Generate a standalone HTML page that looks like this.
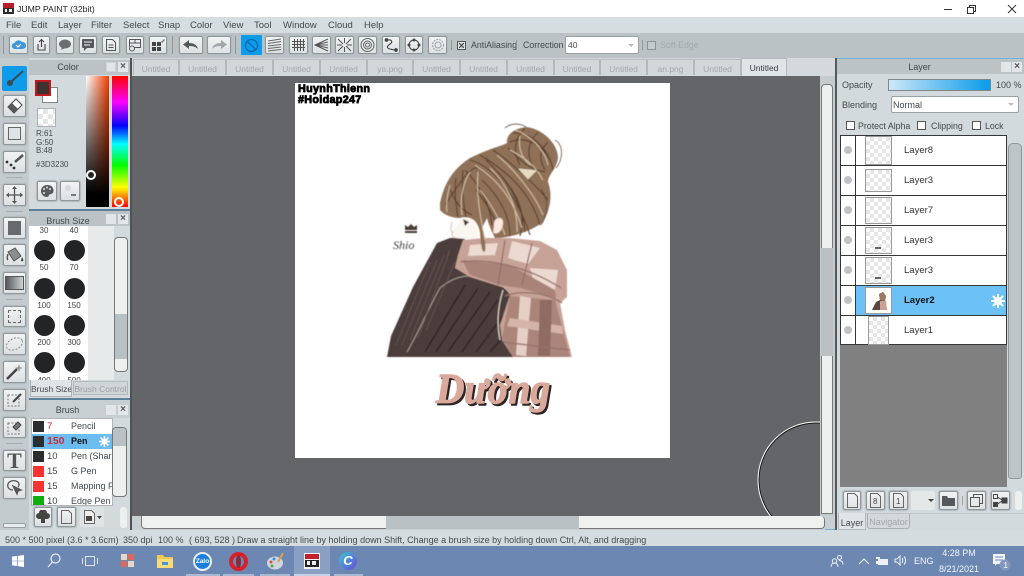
<!DOCTYPE html>
<html><head><meta charset="utf-8"><title>JUMP PAINT</title>
<style>
html,body{margin:0;padding:0;width:1024px;height:576px;overflow:hidden;background:#d5dcdf}
*{box-sizing:border-box}
body{font-family:"Liberation Sans",sans-serif;font-size:9px;color:#44494c;position:relative}
.a,.t,.b,svg.i{position:absolute}
.t{white-space:nowrap;line-height:12px}
.b{background:linear-gradient(#f1f3f4,#dde1e3);border:1px solid #8f979a;border-radius:2px;box-shadow:0 0 1px 1px #b2b9bc}
.c{text-align:center}
.tab{position:absolute;top:59px;height:16px;background:#d2d7d9;border:1px solid #b3b9bc;border-bottom:0;color:#a3a8ab;text-align:center;line-height:18px;font-size:8.500px}
.chk{background:conic-gradient(#e6e6e6 25%,#fff 0 50%,#e6e6e6 0 75%,#fff 0) 0 0/8px 8px}
.lr{position:absolute;left:840px;width:167px;height:30px;background:#fff;border:1px solid #33373a;border-bottom:0}
.dot{position:absolute;left:3px;top:10px;width:8px;height:8px;border-radius:50%;background:#bfc3c5}
.vl{position:absolute;left:14px;top:0;bottom:0;width:1px;background:#33373a}
.th{position:absolute;left:24px;top:1px;width:27px;height:27px;border:1px solid #9a9a9a}
.ln{position:absolute;left:63px;top:9px;font-size:9.500px;line-height:12px;color:#333}
.dotb{position:absolute;width:21px;height:21px;border-radius:50%;background:#222426}
.bl{position:absolute;font-size:8px;width:30px;text-align:center;color:#444;line-height:10px}
.row{position:absolute;left:32px;width:80px;height:15px;background:#fff;line-height:15px;font-size:9px}
.sw{position:absolute;left:1px;top:2px;width:11px;height:11px;background:#2b2d2f}
.n{position:absolute;left:15px;top:0;font-size:9.500px}
.nm{position:absolute;left:39px;top:0;width:41px;overflow:hidden;white-space:nowrap}
.ub{position:absolute;top:574px;height:2px;background:#a9b9d2}
</style></head><body>

<!-- title bar -->
<div class="a" style="left:0;top:0;width:1024px;height:17px;background:#fff"></div>
<svg class="i" style="left:3px;top:3px" width="11" height="11"><rect width="11" height="5" y="0" fill="#b3202a"/><rect y="5" width="11" height="6" fill="#2a2a2a"/><rect x="2" y="6" width="2" height="3" fill="#eee"/><rect x="6" y="6" width="3" height="3" fill="#eee"/></svg>
<div class="t" style="left:17px;top:3px;font-size:8.700px;color:#222">JUMP PAINT (32bit)</div>
<svg class="i" style="left:930px;top:2px" width="94" height="14" fill="none" stroke="#333" stroke-width="1"><path d="M14 7.500h8"/><path d="M37.500 5.500h6v6h-6zM39.500 5.500v-2h6v6h-2"/><path d="M78 3l8 8M86 3l-8 8"/></svg>

<!-- menu bar -->
<div class="a" style="left:0;top:17px;width:1024px;height:16px;background:#d6dde0"></div>
<div class="t" style="left:6px;top:20px;font-size:9.500px">File</div>
<div class="t" style="left:31px;top:20px;font-size:9.500px">Edit</div>
<div class="t" style="left:58px;top:20px;font-size:9.500px">Layer</div>
<div class="t" style="left:91px;top:20px;font-size:9.500px">Filter</div>
<div class="t" style="left:123px;top:20px;font-size:9.500px">Select</div>
<div class="t" style="left:158px;top:20px;font-size:9.500px">Snap</div>
<div class="t" style="left:190px;top:20px;font-size:9.500px">Color</div>
<div class="t" style="left:223px;top:20px;font-size:9.500px">View</div>
<div class="t" style="left:254px;top:20px;font-size:9.500px">Tool</div>
<div class="t" style="left:283px;top:20px;font-size:9.500px">Window</div>
<div class="t" style="left:328px;top:20px;font-size:9.500px">Cloud</div>
<div class="t" style="left:364px;top:20px;font-size:9.500px">Help</div>

<!-- toolbar -->
<div class="a" style="left:0;top:33px;width:1024px;height:25px;background:#bac2c6"></div>
<div class="a" style="left:3px;top:36px;width:1px;height:18px;background:#8f979b"></div>
<div class="a" style="left:172px;top:36px;width:1px;height:18px;background:#8f979b"></div>
<div class="a" style="left:235px;top:36px;width:1px;height:18px;background:#8f979b"></div>
<div class="b" style="left:9px;top:36px;width:19px;height:18px"></div>
<svg class="i" style="left:11px;top:39px" width="15" height="12"><path d="M4 10a3 3 0 0 1-.5-6A4.500 4.500 0 0 1 11 3a3.500 3.500 0 0 1 1 7z" fill="#3d97dc"/><path d="M5 6l2 2 3-3" stroke="#fff" stroke-width="1.200" fill="none"/></svg>
<div class="b" style="left:33px;top:36px;width:17px;height:18px"></div>
<svg class="i" style="left:35px;top:38px" width="13" height="14" fill="none" stroke="#444" stroke-width="1.100"><path d="M3 6v6h7V6M6.500 9V1.500M4 4l2.500-2.500L9 4"/></svg>
<div class="b" style="left:56px;top:36px;width:18px;height:18px"></div>
<svg class="i" style="left:58px;top:39px" width="14" height="12"><ellipse cx="7" cy="5" rx="6" ry="4.500" fill="#6b6f72"/><path d="M4 8l-1 3 4-2z" fill="#6b6f72"/></svg>
<div class="b" style="left:79px;top:36px;width:18px;height:18px"></div>
<svg class="i" style="left:81px;top:39px" width="14" height="12"><rect x="1" y="0" width="12" height="9" rx="1" fill="#55595c"/><path d="M3 9v3l3-3z" fill="#55595c"/><path d="M3 3h8M3 6h6" stroke="#eee"/></svg>
<div class="b" style="left:102px;top:36px;width:18px;height:18px"></div>
<svg class="i" style="left:105px;top:38px" width="12" height="14" fill="none" stroke="#555"><path d="M1.500 1.500h6l3 3v8h-9zM3.500 7h5M3.500 9.500h5"/></svg>
<div class="b" style="left:126px;top:36px;width:18px;height:18px"></div>
<svg class="i" style="left:128px;top:38px" width="14" height="14" fill="none" stroke="#555"><path d="M1.500 1.500h11v8h-6M1.500 1.500v7M1.500 5h11M7 1.500V5"/><circle cx="4" cy="10.500" r="2.500"/></svg>
<div class="b" style="left:149px;top:36px;width:18px;height:18px"></div>
<svg class="i" style="left:151px;top:39px" width="14" height="13" fill="#444"><rect x="1" y="3" width="4" height="4"/><rect x="6" y="3" width="4" height="4"/><rect x="1" y="8" width="4" height="4"/><rect x="6" y="8" width="4" height="4"/><path d="M10 3l3-3 1 1-3 3z" fill="#777"/></svg>
<div class="b" style="left:179px;top:36px;width:24px;height:18px"></div>
<svg class="i" style="left:183px;top:40px" width="16" height="10"><path d="M6 0v3c5 0 8 2 9 6-2-2-5-3-9-3v3L0 4.500z" fill="#55595c"/></svg>
<div class="b" style="left:207px;top:36px;width:24px;height:18px"></div>
<svg class="i" style="left:211px;top:40px" width="16" height="10"><path d="M10 0v3C5 3 2 5 1 9c2-2 5-3 9-3v3l6-4.500z" fill="#a2a7aa"/></svg>
<div class="a" style="left:241px;top:35px;width:21px;height:20px;background:#0d9bea"></div>
<svg class="i" style="left:244px;top:38px" width="15" height="15" fill="none" stroke="#0a69b0" stroke-width="1.300"><circle cx="7.500" cy="7.500" r="6"/><path d="M3.500 3.500l8 8"/></svg>
<div class="b" style="left:265px;top:36px;width:19px;height:18px"></div>
<svg class="i" style="left:267px;top:38px" width="15" height="14" fill="none" stroke="#666"><path d="M1 3l13-2M1 5.500l13-2M1 8l13-1.500M1 10.500l13-1.500M1 13l13-1.500"/></svg>
<div class="b" style="left:289px;top:36px;width:19px;height:18px"></div>
<svg class="i" style="left:291px;top:38px" width="15" height="14" fill="none" stroke="#555"><path d="M1 3.500h13M1 6.500h13M1 9.500h13M3.500 1v12M6.500 1v12M9.500 1v12M12.500 1v12"/></svg>
<div class="b" style="left:312px;top:36px;width:19px;height:18px"></div>
<svg class="i" style="left:314px;top:38px" width="15" height="14" fill="none" stroke="#555"><path d="M14 1L1 7l13 6M14 4L1 7l13 3M14 7H1"/></svg>
<div class="b" style="left:335px;top:36px;width:19px;height:18px"></div>
<svg class="i" style="left:337px;top:38px" width="15" height="14" fill="none" stroke="#555"><path d="M1 1l5 5M14 1L9 6M1 13l5-5M14 13L9 8M7.500 0v5M7.500 9v5M0 7h5M10 7h5"/></svg>
<div class="b" style="left:358px;top:36px;width:19px;height:18px"></div>
<svg class="i" style="left:360px;top:38px" width="15" height="14" fill="none" stroke="#666"><circle cx="7.500" cy="7" r="6.500"/><circle cx="7.500" cy="7" r="4"/><circle cx="7.500" cy="7" r="2"/></svg>
<div class="b" style="left:382px;top:36px;width:18px;height:18px"></div>
<svg class="i" style="left:384px;top:38px" width="14" height="14" fill="none" stroke="#444" stroke-width="1.100"><path d="M3 2c5-1 6 2 3 4s-4 4 0 5 5 1 6 1"/><circle cx="2.500" cy="2" r="1.300" fill="#444"/><circle cx="12" cy="12" r="1.300" fill="#444"/></svg>
<div class="b" style="left:405px;top:36px;width:18px;height:18px"></div>
<svg class="i" style="left:407px;top:38px" width="14" height="14" fill="none" stroke="#444"><circle cx="7" cy="7" r="5"/><g fill="#444"><circle cx="7" cy="2" r="1"/><circle cx="7" cy="12" r="1"/><circle cx="2" cy="7" r="1"/><circle cx="12" cy="7" r="1"/></g></svg>
<div class="b" style="left:428px;top:36px;width:19px;height:18px"></div>
<svg class="i" style="left:431px;top:38px" width="14" height="14" fill="none" stroke="#9ea3a5"><circle cx="7" cy="7" r="5.500" stroke-dasharray="2 1"/><circle cx="7" cy="7" r="3"/></svg>
<div class="a" style="left:451px;top:40px;width:1px;height:10px;background:#8f979b"></div>
<div class="a" style="left:457px;top:41px;width:9px;height:9px;border:1px solid #555;background:#dfe3e5"></div>
<svg class="i" style="left:459px;top:43px" width="5" height="5" stroke="#333"><path d="M0 0l5 5M5 0L0 5"/></svg>
<div class="t" style="left:471px;top:39px;font-size:8.800px">AntiAliasing</div>
<div class="a" style="left:516px;top:40px;width:1px;height:10px;background:#8f979b"></div>
<div class="t" style="left:523px;top:39px;font-size:8.800px">Correction</div>
<div class="a" style="left:565px;top:36px;width:74px;height:18px;background:#fff;border:1px solid #9aa1a4;border-radius:2px;font-size:8.500px;line-height:17px;padding-left:2px">40<span class="a" style="right:4px;top:7px;border:3px solid transparent;border-top-color:#bbb"></span></div>
<div class="a" style="left:642px;top:40px;width:1px;height:10px;background:#8f979b"></div>
<div class="a" style="left:647px;top:41px;width:9px;height:9px;border:1px solid #8d9396;background:#c4cbce"></div>
<div class="t" style="left:660px;top:39px;font-size:8.800px;color:#a3a9ac">Soft Edge</div>

<!-- tabs strip -->
<div class="a" style="left:130px;top:58px;width:705px;height:18px;background:#d3d9dc"></div>
<div class="tab" style="left:133px;width:46px">Untitled</div>
<div class="tab" style="left:179px;width:47px">Untitled</div>
<div class="tab" style="left:226px;width:47px">Untitled</div>
<div class="tab" style="left:273px;width:47px">Untitled</div>
<div class="tab" style="left:320px;width:47px">Untitled</div>
<div class="tab" style="left:367px;width:46px">ya.png</div>
<div class="tab" style="left:413px;width:47px">Untitled</div>
<div class="tab" style="left:460px;width:47px">Untitled</div>
<div class="tab" style="left:507px;width:47px">Untitled</div>
<div class="tab" style="left:554px;width:46px">Untitled</div>
<div class="tab" style="left:600px;width:47px">Untitled</div>
<div class="tab" style="left:647px;width:47px">an.png</div>
<div class="tab" style="left:694px;width:47px">Untitled</div>
<div class="tab" style="left:741px;width:46px;top:58px;height:18px;background:#dfe4e6;color:#3c4144;line-height:19px">Untitled</div>

<!-- canvas area -->
<div class="a" style="left:132px;top:76px;width:688px;height:440px;background:#636569;overflow:hidden">
  <svg class="a" style="left:0;top:0" width="688" height="440"><circle cx="684" cy="404" r="57" fill="none" stroke="#111" stroke-width="1"/><circle cx="684" cy="404" r="58" fill="none" stroke="#fff" stroke-width="1"/></svg>
</div>
<div class="a" style="left:295px;top:83px;width:375px;height:375px;background:#fff"></div>
<div class="t" style="left:298px;top:84px;font-size:10.800px;font-weight:bold;color:#000;line-height:11px;letter-spacing:.3px;-webkit-text-stroke:.8px #000">HuynhThienn<br>#Hoidap247</div>

<svg class="i" style="left:295px;top:83px" width="375" height="375" viewBox="295 83 375 375">
<defs><filter id="s" x="-5%" y="-5%" width="110%" height="110%"><feGaussianBlur stdDeviation=".4"/></filter></defs>
<g filter="url(#s)">
<!-- jacket -->
<path d="M387 357L391 336 413 287 437 243 450 238 465 238 457 268 503 287 514 297 502 325 513 357Z" fill="#4b3c3b"/>
<path d="M407 352C420 330 430 305 440 288 452 278 465 274 476 277" fill="none" stroke="#a59a90" stroke-width="1"/>
<path d="M396 345L430 262M402 345L437 260M410 340L444 255M418 338L450 250M426 330L455 262" stroke="#6a5957" stroke-width=".7" fill="none"/>
<path d="M425 352L465 285M436 352L478 288M448 352L490 292M462 352L498 300M476 352L503 316M490 352L505 335" stroke="#372a2a" stroke-width="1.800" fill="none"/>
<!-- face -->
<path d="M453 230C451 233 451 236 454 238L478 240 476 220 462 218Z" fill="#fcf6f1"/>
<path d="M452 222C450 228 451 232 453 232 451 235 452 238 456 238" stroke="#bfa79c" stroke-width=".7" fill="none"/>
<path d="M463 219L469 222 465 226Z" fill="#4c3a30"/>
<!-- scarf -->
<path d="M463 240L485 238 510 238 540 241 557 250 567 270 567 297 560 303 565 330 572 357 513 357 502 340 500 325 510 295 505 288 470 277 455 268 458 255Z" fill="#c7a296"/>
<path d="M512 241L508 258 528 264 540 248ZM470 245L498 243 495 255 468 256ZM530 268L558 270 555 290 535 285Z" fill="#ecd9d0"/>
<path d="M462 260L510 265 555 290 556 298 520 288 500 285 470 275Z" fill="#a98378"/>
<path d="M510 296L555 300 570 357 513 357 502 338Z" fill="#ab8579"/>
<path d="M520 296L516 355 526 356 531 298Z" fill="#e6cfc5"/>
<path d="M510 318L562 326 563 334 507 326Z" fill="#d5b5a9"/>
<path d="M540 300L538 356 550 356 552 300Z" fill="#8f6c62"/>
<path d="M505 240L498 285M532 243L522 285M460 262C485 258 525 265 561 288M505 296C520 290 545 292 562 303M503 342L570 350" stroke="#94716a" stroke-width="1.300" fill="none"/>
<path d="M503 290C497 310 497 325 500 340" stroke="#d9cfc6" stroke-width="1.200" fill="none"/>
<!-- hair -->
<path d="M440 203C445 180 455 168 470 158 490 148 505 145 507 143 506 134 515 128 527 127 545 130 558 145 558 158 556 170 548 175 548 182 553 195 550 210 543 222 530 232 510 238 495 238 490 228 488 222 487 218L482 228C485 240 487 250 484 252 483 252 481 250 480 232 478 222 472 215 460 218 452 218 444 215 440 210Z" fill="#8f7158"/>
<g fill="none" stroke="#59402e" stroke-width="1.100">
<path d="M470 160C490 165 515 190 530 235M480 155C505 170 530 190 540 225M493 150C515 165 540 190 548 200M465 170C480 185 490 205 492 225M510 142C525 135 545 145 552 165M513 133C530 130 550 150 553 170M508 148C520 160 530 170 545 172M450 190C455 200 460 210 472 215M445 205C455 190 470 165 478 168"/>
<path d="M486 160C505 178 522 200 525 232M498 172C512 188 528 208 520 236M482 180C498 195 510 215 510 236M476 190C488 205 495 218 500 232M525 128C515 138 512 150 520 165M538 132C528 142 525 155 535 170M548 142C540 150 538 158 545 170M456 178C454 192 456 205 458 217M463 170C461 190 464 205 466 217"/>
</g>
<g fill="none" stroke="#d6c2a8" stroke-width="1">
<path d="M475 165C490 175 510 190 522 228M497 155C515 170 535 195 543 215M515 130C530 135 545 150 548 165M478 172C476 195 480 215 485 240M490 168C505 182 518 205 517 232M510 150C525 158 535 165 543 180M470 172C462 185 460 200 462 215M450 185C447 195 446 205 447 212M520 136C518 148 522 158 530 165M480 190C492 205 500 220 505 235"/>
</g>
<path d="M555 140C564 145 563 160 556 168M541 189C549 200 548 215 541 225M505 128C512 122 522 124 526 127" fill="none" stroke="#4f3a2c" stroke-width=".7"/>
<path d="M517 168L538 170 528 180Z" fill="#e6dcc2" stroke="#6b5540" stroke-width=".6"/>
<path d="M494 222C497 215 505 217 503 225 502 232 497 235 493 233Z" fill="#fbe9df" stroke="#a8836a" stroke-width=".5"/>
<!-- crown/signature -->
<path d="M405 230L405 225 408 227 411 224 414 227 417 225 417 230Z M405 231H417V233H405Z" fill="#4a3b36"/>
<text x="393" y="249" font-family="Liberation Serif,serif" font-style="italic" font-size="12" fill="#3a3a3a">Shio</text>
</g>
<!-- Duong lettering -->
<text x="438" y="405" font-family="Liberation Serif,serif" font-weight="bold" font-style="italic" font-size="42" fill="#2e2424" stroke="#2e2424" stroke-width="1.400" stroke-linejoin="round" textLength="114" lengthAdjust="spacingAndGlyphs">Dưỡng</text>
<text x="436" y="403" font-family="Liberation Serif,serif" font-weight="bold" font-style="italic" font-size="42" fill="#d9a99c" stroke="#d9a99c" stroke-width="1.400" stroke-linejoin="round" textLength="114" lengthAdjust="spacingAndGlyphs">Dưỡng</text>
</svg>

<!-- canvas scrollbars -->
<div class="a" style="left:820px;top:76px;width:15px;height:454px;background:#c4ccd0"></div>
<div class="a" style="left:821px;top:84px;width:12px;height:430px;background:#eef0f0;border:1px solid #777;border-radius:4px 4px 0 0"></div>
<div class="a" style="left:821px;top:248px;width:12px;height:108px;background:#b9c1c4"></div>
<div class="a" style="left:132px;top:516px;width:703px;height:14px;background:#c8d0d3"></div>
<div class="a" style="left:141px;top:516px;width:684px;height:13px;background:#eff1f1;border:1px solid #777;border-top:0;border-radius:0 4px 4px 4px"></div>
<div class="a" style="left:386px;top:516px;width:193px;height:13px;background:#b9c1c4"></div>
<div class="a" style="left:825px;top:529px;width:10px;height:1px;background:#6cb4de"></div>
<div class="a" style="left:835px;top:58px;width:2px;height:472px;background:#55595c"></div>

<!-- left column -->
<div class="a" style="left:0;top:58px;width:29px;height:472px;background:#c3cbce"></div>
<div class="a" style="left:29px;top:58px;width:103px;height:472px;background:#d3dadd"></div>
<div class="a" style="left:130px;top:58px;width:2px;height:472px;background:#4e5255"></div>

<div class="a" style="left:2px;top:66px;width:25px;height:25px;background:#0d9bea;border-radius:2px"></div>
<svg class="i" style="left:4px;top:68px" width="21" height="21" fill="none" stroke="#3a4a55"><path d="M19 3L8 13" stroke-width="2"/><circle cx="6" cy="15" r="2.500" fill="#3a4a55"/></svg>
<div class="b" style="left:3px;top:95px;width:23px;height:22px"></div>
<svg class="i" style="left:4px;top:96px" width="21" height="20"><path d="M4 11l8-8 6 6-8 8z" fill="#fff" stroke="#444"/><path d="M4 11l4-4 6 6-4 4z" fill="#55595c"/></svg>
<div class="b" style="left:3px;top:123px;width:23px;height:22px"></div>
<div class="a" style="left:8px;top:127px;width:13px;height:13px;border:1px solid #666;background:#dfe3e5"></div>
<div class="b" style="left:3px;top:151px;width:23px;height:22px"></div>
<svg class="i" style="left:4px;top:152px" width="21" height="20"><path d="M11 10L19 3" stroke="#555" stroke-width="2.500"/><circle cx="3" cy="10" r="1.400" fill="#333"/><circle cx="7" cy="13" r="1.400" fill="#333"/><circle cx="10" cy="16" r="1.400" fill="#333"/></svg>
<div class="a" style="left:6px;top:177px;width:17px;height:1px;background:#a8afb2"></div>
<div class="b" style="left:3px;top:184px;width:23px;height:22px"></div>
<svg class="i" style="left:5px;top:185px" width="19" height="20" stroke="#555" fill="#555" stroke-width="1.300"><path d="M9.500 2v16M1.500 10h16" fill="none"/><path d="M9.500 1l-2.500 3h5zM9.500 19l-2.500-3h5zM1 10l3-2.500v5zM18 10l-3-2.500v5z" stroke="none"/></svg>
<div class="a" style="left:6px;top:211px;width:17px;height:1px;background:#a8afb2"></div>
<div class="b" style="left:3px;top:217px;width:23px;height:22px"></div>
<div class="a" style="left:8px;top:221px;width:13px;height:14px;background:#666a6d"></div>
<div class="b" style="left:3px;top:244px;width:23px;height:22px"></div>
<svg class="i" style="left:4px;top:245px" width="21" height="20"><path d="M4 7l7-4 6 8-7 5z" fill="#8a8e90" stroke="#555"/><path d="M4 9c-1 3-1 5 0 6" stroke="#555" stroke-width="1.500" fill="none"/><path d="M18 12c1 2 2 3 1 4s-2 0-2-1z" fill="#444"/></svg>
<div class="b" style="left:3px;top:272px;width:23px;height:22px"></div>
<div class="a" style="left:5px;top:276px;width:19px;height:14px;background:linear-gradient(90deg,#55585a,#cfd2d4);border:1px solid #555"></div>
<div class="a" style="left:6px;top:299px;width:17px;height:1px;background:#a8afb2"></div>
<div class="b" style="left:3px;top:306px;width:23px;height:21px"></div>
<div class="a" style="left:8px;top:310px;width:13px;height:13px;border:1px dashed #666"></div>
<div class="b" style="left:3px;top:333px;width:23px;height:22px"></div>
<svg class="i" style="left:4px;top:334px" width="21" height="20" fill="none" stroke="#8a8e90" stroke-dasharray="2 1.500"><ellipse cx="10.500" cy="10" rx="8.500" ry="5.500" transform="rotate(-25 10.500 10)"/></svg>
<div class="b" style="left:3px;top:361px;width:23px;height:22px"></div>
<svg class="i" style="left:4px;top:362px" width="21" height="20"><path d="M3 17L13 7" stroke="#444" stroke-width="2.500"/><path d="M15 2l1 3 3 1-3 1-1 3-1-3-3-1 3-1z" fill="#999"/></svg>
<div class="b" style="left:3px;top:389px;width:23px;height:22px"></div>
<svg class="i" style="left:5px;top:391px" width="19" height="18" fill="none"><rect x="3" y="4" width="11" height="11" stroke="#777" stroke-dasharray="2 1.500"/><path d="M8 11l8-8" stroke="#444" stroke-width="2"/></svg>
<div class="b" style="left:3px;top:417px;width:23px;height:21px"></div>
<svg class="i" style="left:5px;top:418px" width="19" height="19" fill="none"><rect x="3" y="5" width="11" height="11" stroke="#777" stroke-dasharray="2 1.500"/><path d="M8 9l5-5 3 3-5 5z" fill="#777" stroke="#444"/></svg>
<div class="a" style="left:6px;top:443px;width:17px;height:1px;background:#a8afb2"></div>
<div class="b" style="left:3px;top:450px;width:23px;height:21px"></div>
<div class="t c" style="left:2px;top:450px;width:25px;line-height:22px;font-family:'Liberation Serif',serif;font-weight:bold;font-size:22px;color:#555">T</div>
<div class="b" style="left:3px;top:477px;width:23px;height:22px"></div>
<svg class="i" style="left:4px;top:478px" width="21" height="20" fill="none" stroke="#555" stroke-width="1.300"><path d="M9 12C5 12 3 9 4 6s5-4 8-3 4 4 2 6"/><path d="M9 8l8 4-3 1-1 3z" fill="#555"/></svg>
<div class="a" style="left:3px;top:523px;width:23px;height:5px;background:#e8ecee;border:1px solid #9aa1a4;border-radius:2px"></div>

<!-- Color panel -->
<div class="a" style="left:29px;top:60px;width:101px;height:15px;background:#bcc3c6"></div>
<div class="t c" style="left:29px;top:61px;width:78px;font-size:9px">Color</div>
<div class="a" style="left:106px;top:62px;width:10px;height:10px;background:#e2e6e8;border:1px solid #cfd4d6"></div>
<div class="a" style="left:118px;top:62px;width:10px;height:10px;background:#e2e6e8;color:#555;font-size:10px;line-height:10px;text-align:center;font-weight:bold">×</div>
<div class="a" style="left:42px;top:87px;width:16px;height:16px;background:#fff;border:1px solid #7f8689"></div>
<div class="a" style="left:35px;top:80px;width:16px;height:16px;background:#3d3230;border:2px solid #c01a1c"></div>
<div class="a chk" style="left:37px;top:108px;width:19px;height:19px;border:1px solid #aab0b3;background-size:10px 10px"></div>
<div class="t" style="left:36px;top:130px;font-size:8px;line-height:8.500px">R:61<br>G:50<br>B:48</div>
<div class="t" style="left:36px;top:159px;font-size:8px">#3D3230</div>
<div class="b" style="left:37px;top:181px;width:20px;height:20px"></div>
<svg class="i" style="left:39px;top:183px" width="16" height="16"><path d="M8 2a6 6 0 1 0 0 12c2 0 1.500-2 2.500-2.500S15 11 14.500 7 11 2 8 2z" fill="#55595c"/><g fill="#e5e5e5"><circle cx="5" cy="6" r="1"/><circle cx="8" cy="4.500" r="1"/><circle cx="11" cy="6" r="1"/><circle cx="5" cy="10" r="1"/></g></svg>
<div class="b" style="left:60px;top:181px;width:20px;height:20px"></div>
<svg class="i" style="left:63px;top:184px" width="15" height="14"><circle cx="5" cy="4" r="3" fill="#d6d9da"/><path d="M8 11h5" stroke="#555" stroke-width="1.500"/></svg>
<div class="a" style="left:86px;top:76px;width:23px;height:131px;background:linear-gradient(to bottom,rgba(0,0,0,0),#000 90%),linear-gradient(to right,#fff,#f33c00)"></div>
<div class="a" style="left:112px;top:76px;width:16px;height:131px;background:linear-gradient(#f00,#f0f 20%,#00f 38%,#0ff 52%,#0f0 68%,#ff0 85%,#f00)"></div>
<div class="a" style="left:86px;top:170px;width:10px;height:10px;border-radius:50%;border:2px solid #fff;background:#222"></div>
<div class="a" style="left:114px;top:197px;width:10px;height:10px;border-radius:50%;border:2px solid #fff"></div>
<div class="a" style="left:29px;top:209px;width:101px;height:2px;background:#5b7f9c"></div>

<!-- Brush size panel -->
<div class="a" style="left:29px;top:211px;width:101px;height:15px;background:#bcc3c6"></div>
<div class="t c" style="left:29px;top:215px;width:78px;font-size:9px">Brush Size</div>
<div class="a" style="left:106px;top:214px;width:10px;height:10px;background:#e2e6e8"></div>
<div class="a" style="left:118px;top:214px;width:10px;height:10px;background:#e2e6e8;color:#555;font-size:10px;line-height:10px;text-align:center;font-weight:bold">×</div>
<div class="a" style="left:29px;top:226px;width:59px;height:154px;background:#fff"></div>
<div class="a" style="left:88px;top:226px;width:26px;height:154px;background:#e7eaeb"></div>
<div class="a" style="left:59px;top:226px;width:1px;height:154px;background:#eee"></div>
<div class="bl" style="left:29px;top:226px">30</div><div class="bl" style="left:59px;top:226px">40</div>
<div class="dotb" style="left:34px;top:240px"></div><div class="dotb" style="left:64px;top:240px"></div>
<div class="bl" style="left:29px;top:263px">50</div><div class="bl" style="left:59px;top:263px">70</div>
<div class="dotb" style="left:34px;top:278px"></div><div class="dotb" style="left:64px;top:278px"></div>
<div class="bl" style="left:29px;top:301px">100</div><div class="bl" style="left:59px;top:301px">150</div>
<div class="dotb" style="left:34px;top:315px"></div><div class="dotb" style="left:64px;top:315px"></div>
<div class="bl" style="left:29px;top:338px">200</div><div class="bl" style="left:59px;top:338px">300</div>
<div class="dotb" style="left:34px;top:352px"></div><div class="dotb" style="left:64px;top:352px"></div>
<div class="a" style="left:29px;top:376px;width:59px;height:4px;overflow:hidden"><div class="bl" style="left:0;top:0">400</div><div class="bl" style="left:30px;top:0">500</div></div>
<div class="a" style="left:114px;top:237px;width:14px;height:135px;background:#eef0f0;border:1px solid #777;border-radius:4px"></div>
<div class="a" style="left:115px;top:314px;width:12px;height:45px;background:#b9c1c4"></div>
<div class="a" style="left:29px;top:380px;width:101px;height:18px;background:#d3dadd"></div>
<div class="a" style="left:30px;top:380px;width:42px;height:17px;background:#dfe4e6;border:1px solid #aab0b3;border-top:0;font-size:8.500px;line-height:18px;text-align:center;white-space:nowrap;overflow:hidden">Brush Size</div>
<div class="a" style="left:73px;top:381px;width:55px;height:14px;background:#d0d5d7;border:1px solid #b3b9bc;font-size:8.500px;line-height:14px;text-align:center;color:#9aa0a3;white-space:nowrap;overflow:hidden">Brush Control</div>
<div class="a" style="left:29px;top:398px;width:101px;height:2px;background:#5b7f9c"></div>

<!-- Brush panel -->
<div class="a" style="left:29px;top:400px;width:101px;height:18px;background:#c8cfd2"></div>
<div class="t c" style="left:29px;top:404px;width:77px;font-size:9px">Brush</div>
<div class="a" style="left:106px;top:405px;width:10px;height:10px;background:#e2e6e8"></div>
<div class="a" style="left:118px;top:405px;width:10px;height:10px;background:#e2e6e8;color:#555;font-size:10px;line-height:10px;text-align:center;font-weight:bold">×</div>
<div class="a" style="left:31px;top:418px;width:82px;height:88px;background:#fff;border:1px solid #b0b6b9;overflow:hidden"></div>
<div class="row" style="top:419px"><span class="sw"></span><span class="n" style="color:#c22">7</span><span class="nm">Pencil</span></div>
<div class="row" style="top:434px;background:#6cbcf0;font-weight:bold"><span class="sw"></span><span class="n" style="color:#c7303c;font-size:10.500px">150</span><span class="nm" style="color:#111">Pen</span><svg class="a" style="left:67px;top:2px" width="11" height="11" fill="#fff"><circle cx="5.500" cy="5.500" r="3"/><path d="M5.500 0v11M0 5.500h11M1.500 1.500l8 8M9.500 1.500l-8 8" stroke="#fff" stroke-width="1.500"/></svg></div>
<div class="row" style="top:449px"><span class="sw"></span><span class="n">10</span><span class="nm">Pen (Shar</span></div>
<div class="row" style="top:464px"><span class="sw" style="background:#f63333"></span><span class="n">15</span><span class="nm">G Pen</span></div>
<div class="row" style="top:479px"><span class="sw" style="background:#f63333"></span><span class="n">15</span><span class="nm">Mapping P</span></div>
<div class="row" style="top:494px;height:11px;overflow:hidden"><span class="sw" style="background:#11ad11"></span><span class="n">10</span><span class="nm">Edge Pen</span></div>
<div class="a" style="left:112px;top:427px;width:15px;height:70px;background:#eef0f0;border:1px solid #777;border-radius:4px"></div>
<div class="a" style="left:113px;top:428px;width:13px;height:18px;background:#b9c1c4;border-radius:3px 3px 0 0"></div>
<div class="b" style="left:34px;top:507px;width:18px;height:20px"></div>
<svg class="i" style="left:36px;top:510px" width="14" height="14"><path d="M3 9a3 3 0 0 1 0-6 4 4 0 0 1 8 0 3 3 0 0 1 0 6H9v4H5V9z" fill="#444"/></svg>
<div class="b" style="left:57px;top:507px;width:19px;height:20px"></div>
<svg class="i" style="left:60px;top:510px" width="13" height="14" fill="none" stroke="#666"><path d="M1.500 .5h7l3 3v10h-10z"/></svg>
<div class="a" style="left:80px;top:507px;width:24px;height:20px;background:#dfe3e5;border-radius:2px"></div>
<svg class="i" style="left:83px;top:510px" width="20" height="14"><path d="M1.500 .5h7l3 3v10h-10z" fill="#eee" stroke="#666"/><rect x="3" y="6" width="6" height="5" fill="#444"/><path d="M14 6l2.500 3 2.500-3z" fill="#444"/></svg>
<div class="a" style="left:120px;top:507px;width:7px;height:21px;background:#eef0f0;border-radius:3px"></div>

<!-- Right panel -->
<div class="a" style="left:837px;top:58px;width:187px;height:472px;background:#d3dadd"></div>
<div class="a" style="left:837px;top:58px;width:187px;height:1px;background:#6cb4de"></div>
<div class="a" style="left:837px;top:59px;width:187px;height:15px;background:#bcc3c6"></div>
<div class="t c" style="left:837px;top:61px;width:165px;font-size:9px">Layer</div>
<div class="a" style="left:1001px;top:62px;width:10px;height:10px;background:#e2e6e8"></div>
<div class="a" style="left:1012px;top:62px;width:10px;height:10px;background:#e2e6e8;color:#555;font-size:10px;line-height:10px;text-align:center;font-weight:bold">×</div>
<div class="t" style="left:842px;top:79px;font-size:9px">Opacity</div>
<div class="a" style="left:888px;top:79px;width:103px;height:12px;background:linear-gradient(90deg,#cde7f8,#0a9bea);border:1px solid #7f878b"></div>
<div class="t" style="left:996px;top:79px;font-size:9px">100 %</div>
<div class="t" style="left:842px;top:99px;font-size:9px">Blending</div>
<div class="a" style="left:891px;top:96px;width:128px;height:17px;background:#fff;border:1px solid #9aa1a4;border-radius:2px;font-size:9px;line-height:16px;padding-left:1px">Normal<span class="a" style="right:4px;top:6px;border:3px solid transparent;border-top-color:#bbb"></span></div>
<div class="a" style="left:846px;top:121px;width:9px;height:9px;background:#fff;border:1px solid #555"></div>
<div class="t" style="left:858px;top:120px;font-size:8.800px">Protect Alpha</div>
<div class="a" style="left:917px;top:121px;width:9px;height:9px;background:#fff;border:1px solid #555"></div>
<div class="t" style="left:931px;top:120px;font-size:8.800px">Clipping</div>
<div class="a" style="left:972px;top:121px;width:9px;height:9px;background:#fff;border:1px solid #555"></div>
<div class="t" style="left:985px;top:120px;font-size:8.800px">Lock</div>

<div class="a" style="left:840px;top:135px;width:167px;height:352px;background:#808080"></div>
<div class="lr" style="top:135px"><i class="dot"></i><i class="vl"></i><i class="th chk" style="top:0;height:29px"></i><span class="ln">Layer8</span></div>
<div class="lr" style="top:165px"><i class="dot"></i><i class="vl"></i><i class="th chk" style="top:3px;height:23px"></i><span class="ln">Layer3</span></div>
<div class="lr" style="top:195px"><i class="dot"></i><i class="vl"></i><i class="th chk"></i><span class="ln">Layer7</span></div>
<div class="lr" style="top:225px"><i class="dot"></i><i class="vl"></i><i class="th chk"><b class="a" style="left:9px;top:19px;width:6px;height:2px;background:#666"></b></i><span class="ln">Layer3</span></div>
<div class="lr" style="top:255px"><i class="dot"></i><i class="vl"></i><i class="th chk"><b class="a" style="left:9px;top:19px;width:6px;height:2px;background:#666"></b></i><span class="ln">Layer3</span></div>
<div class="lr" style="top:285px"><i class="dot"></i><i class="vl"></i><div class="a" style="left:15px;top:0;right:0;bottom:0;background:#6cc2f6"></div><i class="th" style="background:#fff"><svg class="a" style="left:4px;top:3px" width="18" height="20"><path d="M2 19L6 11 10 9 9 3 13 1 16 5 15 10 17 19Z" fill="#5b4540"/><path d="M9 3l4-2 3 4-1 5-5-1z" fill="#9b7a60"/><path d="M10 10l6 0 1 9-7 0z" fill="#c8a094"/></svg></i><span class="ln" style="font-weight:bold;color:#111">Layer2</span><svg class="a" style="left:150px;top:8px" width="14" height="14"><circle cx="7" cy="7" r="4" fill="#fff"/><path d="M7 0v14M0 7h14M2 2l10 10M12 2L2 12" stroke="#fff" stroke-width="2"/></svg></div>
<div class="lr" style="top:315px;border-bottom:1px solid #33373a"><i class="dot"></i><i class="vl"></i><i class="th chk" style="left:27px;width:21px;top:0;height:29px"></i><span class="ln">Layer1</span></div>

<div class="a" style="left:1008px;top:143px;width:14px;height:336px;background:#bcc4c8;border:1px solid #8f979b;border-radius:5px 5px 3px 3px"></div>

<div class="b" style="left:843px;top:491px;width:18px;height:19px"></div>
<svg class="i" style="left:846px;top:493px" width="13" height="15" fill="none" stroke="#666"><path d="M1.500 .5h7l3 3v11h-10z"/></svg>
<div class="b" style="left:866px;top:491px;width:19px;height:19px"></div>
<svg class="i" style="left:869px;top:493px" width="13" height="15" fill="none" stroke="#666"><path d="M1.500 .5h7l3 3v11h-10z"/><text x="4" y="11" font-size="8" fill="#444" stroke="none" font-family="Liberation Sans">8</text></svg>
<div class="b" style="left:889px;top:491px;width:19px;height:19px"></div>
<svg class="i" style="left:892px;top:493px" width="13" height="15" fill="none" stroke="#666"><path d="M1.500 .5h7l3 3v11h-10z"/><text x="4" y="11" font-size="8" fill="#444" stroke="none" font-family="Liberation Sans">1</text></svg>
<div class="a" style="left:911px;top:491px;width:24px;height:19px;background:#e3e7e8;border-radius:2px"></div>
<div class="a" style="left:928px;top:499px;border:3px solid transparent;border-top-color:#444"></div>
<div class="b" style="left:939px;top:491px;width:19px;height:19px"></div>
<svg class="i" style="left:942px;top:495px" width="13" height="11"><path d="M0 1h5l1 2h7v8H0z" fill="#55595c"/></svg>
<div class="a" style="left:962px;top:496px;width:1px;height:9px;background:#a0a6a9"></div>
<div class="b" style="left:967px;top:491px;width:19px;height:19px"></div>
<svg class="i" style="left:970px;top:494px" width="13" height="13" fill="none" stroke="#555"><rect x="3.500" y=".5" width="9" height="9"/><rect x=".5" y="3.500" width="9" height="9" fill="#e6e9ea"/></svg>
<div class="b" style="left:991px;top:491px;width:19px;height:19px"></div>
<svg class="i" style="left:993px;top:494px" width="15" height="13" stroke="#444" fill="none"><rect x=".5" y=".5" width="4" height="4"/><rect x=".5" y="8.500" width="4" height="4" fill="#444"/><rect x="9" y="4" width="5" height="5" fill="#444"/><path d="M4.500 3L9 6M4.500 10L9 7"/></svg>
<div class="a" style="left:1015px;top:491px;width:7px;height:19px;background:#eef0f0;border-radius:3px"></div>
<div class="a" style="left:839px;top:513px;width:185px;height:1px;background:#bfc6c9"></div>
<div class="a" style="left:838px;top:513px;width:28px;height:17px;background:#dfe4e6;border:1px solid #b3b9bc;border-top:0;font-size:9px;line-height:20px;text-align:center">Layer</div>
<div class="a" style="left:867px;top:514px;width:43px;height:15px;background:#d3d8da;border:1px solid #aab0b3;border-top:0;border-radius:0 0 3px 3px;font-size:9px;line-height:16px;text-align:center;color:#a3a9ac">Navigator</div>

<!-- status bar -->
<div class="a" style="left:0;top:530px;width:1024px;height:16px;background:#d5dcdf"></div>
<div class="t" style="left:5px;top:534px;font-size:9px">500 * 500 pixel</div>
<div class="t" style="left:67px;top:534px;font-size:9px">(3.6 * 3.6cm)</div>
<div class="t" style="left:123px;top:534px;font-size:9px">350 dpi</div>
<div class="t" style="left:158px;top:534px;font-size:9px">100 %</div>
<div class="t" style="left:189px;top:534px;font-size:9px">( 693, 528 )</div>
<div class="t" style="left:237px;top:534px;font-size:9px">Draw a straight line by holding down Shift, Change a brush size by holding down Ctrl, Alt, and dragging</div>

<!-- taskbar -->
<div class="a" style="left:0;top:546px;width:1024px;height:30px;background:#6c87b1"></div>
<div class="a" style="left:294px;top:546px;width:36px;height:30px;background:#8aa0c2"></div>
<div class="ub" style="left:186px;width:34px"></div><div class="ub" style="left:223px;width:31px"></div><div class="ub" style="left:260px;width:30px"></div><div class="ub" style="left:294px;width:36px;background:#c6d1e3"></div><div class="ub" style="left:334px;width:29px"></div>
<svg class="i" style="left:12px;top:555px" width="12" height="12" fill="#fff"><path d="M0 1.500L5.300 1v4.700H0zM6 .9L12 0v5.700H6zM0 6.300h5.300V11L0 10.400zM6 6.300h6V12L6 11.100z"/></svg>
<svg class="i" style="left:47px;top:553px" width="14" height="15" fill="none" stroke="#e8edf5" stroke-width="1.200"><circle cx="8.500" cy="5.500" r="4.500"/><path d="M5.500 9L1 14"/></svg>
<svg class="i" style="left:81px;top:555px" width="18" height="12" fill="none" stroke="#dde4ef"><rect x="4.500" y="1.500" width="9" height="9"/><path d="M1.500 3v6M16.500 3v6"/></svg>
<svg class="i" style="left:120px;top:553px" width="16" height="15"><rect x="1" y="1" width="6" height="6" fill="#e8d6c8"/><rect x="8" y="1" width="6" height="6" fill="#d86a5c"/><rect x="1" y="8" width="6" height="6" fill="#d86a5c"/><rect x="8" y="8" width="6" height="6" fill="#e8d6c8"/></svg>
<svg class="i" style="left:157px;top:554px" width="16" height="14"><path d="M0 1h6l1.500 2H16v11H0z" fill="#f1c94f"/><path d="M0 5h16v9H0z" fill="#f8dc7c"/><rect x="5" y="8" width="6" height="3" fill="#3f9bd6"/></svg>
<div class="a" style="left:193px;top:552px;width:19px;height:19px;border-radius:50%;background:#1c7fe0;border:2px solid #e8f1fc;color:#fff;font-size:6.500px;line-height:15px;text-align:center;font-weight:bold">Zalo</div>
<svg class="i" style="left:229px;top:552px" width="19" height="19"><circle cx="9.500" cy="9.500" r="7.500" fill="none" stroke="#d8202a" stroke-width="4"/><ellipse cx="9.500" cy="9.500" rx="2.500" ry="6.500" fill="#8a2a3a"/></svg>
<svg class="i" style="left:266px;top:552px" width="19" height="19"><ellipse cx="9" cy="11" rx="8" ry="6.500" fill="#cfd5de"/><circle cx="5" cy="10" r="1.500" fill="#d65a3a"/><circle cx="8" cy="7" r="1.500" fill="#3d8fd6"/><circle cx="6" cy="14" r="1.500" fill="#5aa84a"/><path d="M12 10L17 1" stroke="#d8a24a" stroke-width="2"/></svg>
<svg class="i" style="left:304px;top:553px" width="16" height="16"><rect width="16" height="16" fill="#f2f2f2"/><rect x="1" y="1" width="14" height="5" fill="#c0202a"/><rect x="1" y="7" width="14" height="7" fill="#222"/><rect x="3" y="8" width="3" height="4" fill="#eee"/><rect x="8" y="8" width="4" height="4" fill="#eee"/></svg>
<div class="a" style="left:339px;top:552px;width:18px;height:18px;border-radius:50%;background:linear-gradient(135deg,#3ac4d8,#6a4ad8);color:#fff;font-size:13px;line-height:18px;text-align:center;font-weight:bold;font-style:italic">C</div>
<svg class="i" style="left:830px;top:554px" width="14" height="14" fill="none" stroke="#eef2f8"><circle cx="4.500" cy="7" r="2.200"/><path d="M1 13c0-3 2-4 3.500-4S8 10 8 13"/><circle cx="9.500" cy="3.500" r="2"/><path d="M9 6.500c2 0 4 1 4 4"/></svg>
<svg class="i" style="left:858px;top:558px" width="12" height="7" fill="none" stroke="#eef2f8" stroke-width="1.100"><path d="M1 6l5-5 5 5"/></svg>
<svg class="i" style="left:876px;top:556px" width="13" height="10" fill="#eef2f8"><rect x="2" y="3" width="10" height="6"/><rect x="0" y="1" width="4" height="2"/><rect x="0" y="5" width="2" height="3"/></svg>
<svg class="i" style="left:894px;top:555px" width="13" height="11" fill="none" stroke="#eef2f8"><path d="M1 4v3h2l3 3V1L3 4zM8 3c1 1 1 4 0 5M10 1.500c2 2 2 6 0 8"/></svg>
<div class="t" style="left:914px;top:555px;font-size:9px;color:#f2f5fa">ENG</div>
<div class="t c" style="left:930px;top:547px;width:58px;font-size:9px;color:#f2f5fa">4:28 PM</div>
<div class="t c" style="left:930px;top:563px;width:58px;font-size:9px;color:#f2f5fa">8/21/2021</div>
<svg class="i" style="left:992px;top:553px" width="20" height="18"><path d="M1 1h12v10H5l-2 2v-2H1z" fill="#f2f5fa"/><path d="M3 4h8M3 7h8" stroke="#6c87b1"/><circle cx="13" cy="12" r="5.500" fill="#8398bb"/><text x="11.500" y="15" font-size="8" fill="#fff" font-family="Liberation Sans">1</text></svg>

</body></html>
